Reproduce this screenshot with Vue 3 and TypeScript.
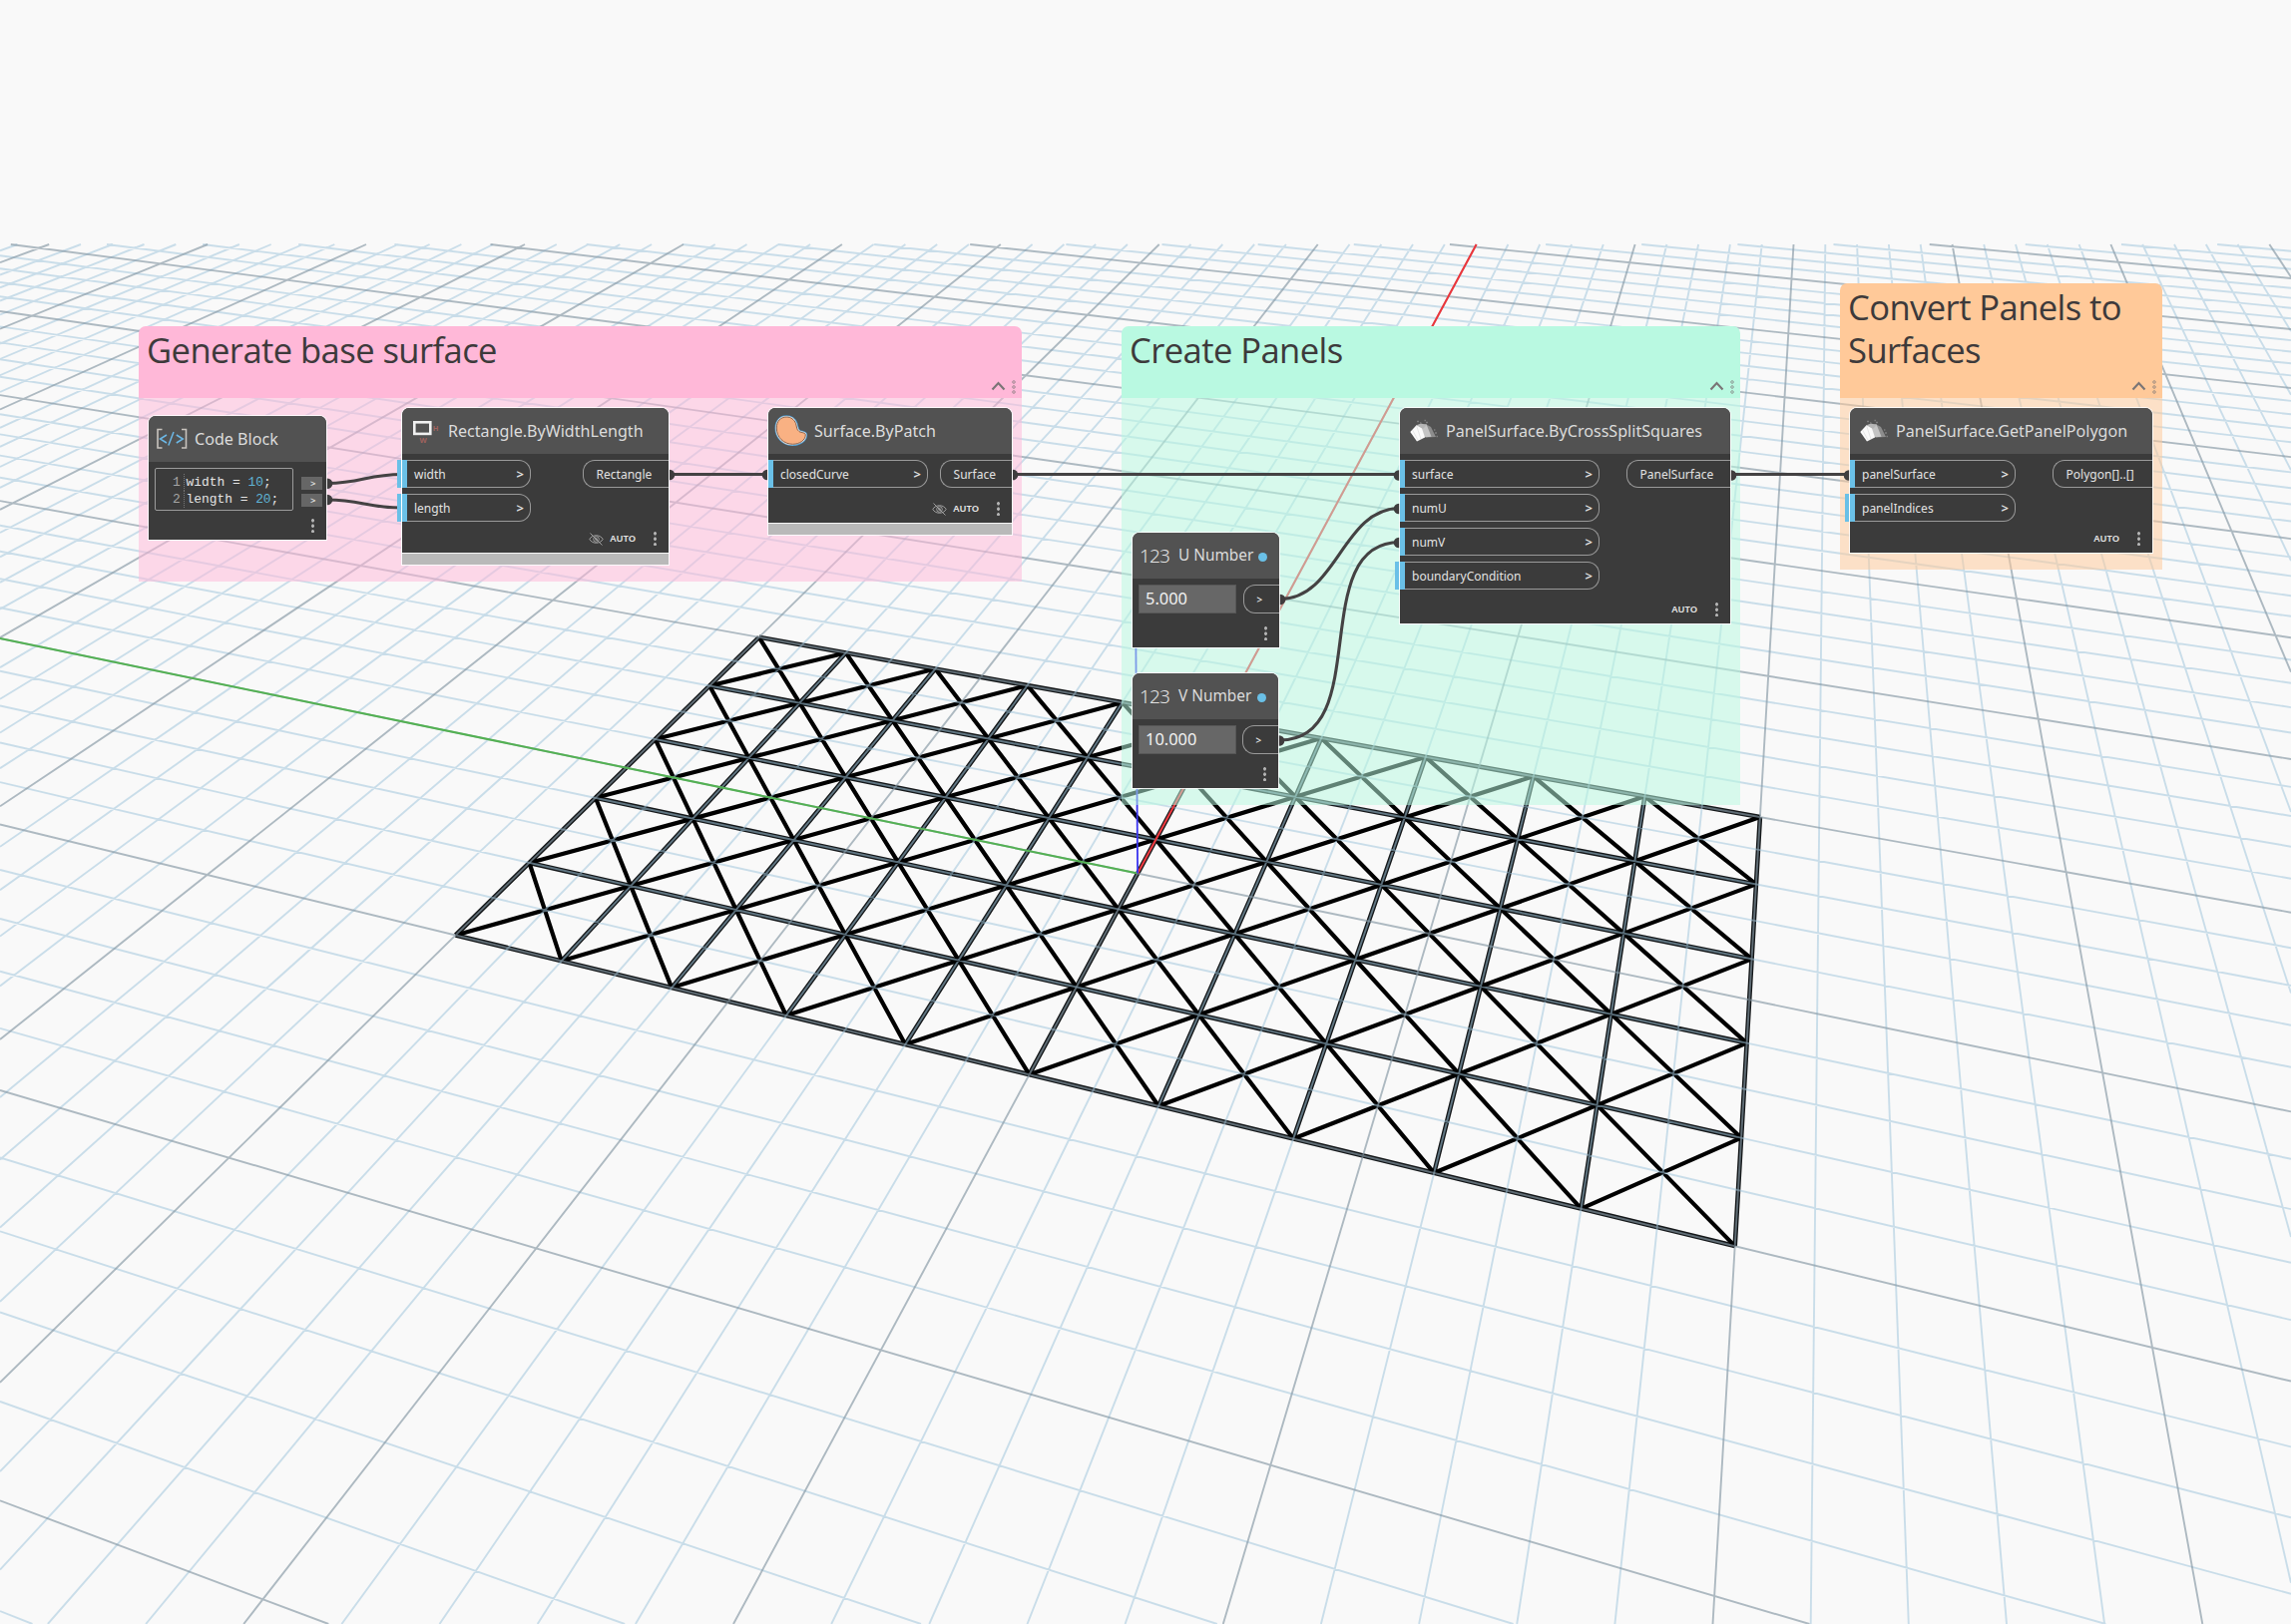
<script setup lang="ts">
interface Seg { x1: number; y1: number; x2: number; y2: number }
interface Group { id: string; title: string; x: number; y: number; w: number; h: number; head: number; color: string }
interface Port { name: string; loose?: boolean }
interface GraphNode {
  id: string; kind: 'rect' | 'patch' | 'panel'; title: string
  x: number; y: number; w: number; h: number
  inputs: Port[]; inW: number; output: string; outW: number
  hidden?: boolean; strip?: boolean
}
interface NumberNode { id: string; title: string; value: string; x: number; y: number; w: number }

const VIEW = { left: 0, right: 2296, top: 245, bottom: 1628 }

// Screen (in thousands of px) -> ground plane projection
const P = {
  u: [49.922603, 50.833715, -70.451087],
  v: [-16.507264, 91.8723, -46.133447],
  w: [0.000041, 2.395529, 1],
}

/** Screen-space line on which ground coordinate `axis` equals k, clipped to the viewport. */
function gridLine(axis: 'u' | 'v', k: number): Seg | null {
  const a = P[axis][0] - k * P.w[0]
  const b = P[axis][1] - k * P.w[1]
  const c = (P[axis][2] - k * P.w[2]) * 1000
  const pts: [number, number][] = []
  for (const x of [VIEW.left, VIEW.right]) {
    const y = -(a * x + c) / b
    if (y >= VIEW.top && y <= VIEW.bottom) pts.push([x, y])
  }
  for (const y of [VIEW.top, VIEW.bottom]) {
    const x = -(b * y + c) / a
    if (x > VIEW.left && x < VIEW.right) pts.push([x, y])
  }
  if (pts.length < 2) return null
  return { x1: pts[0][0], y1: pts[0][1], x2: pts[1][0], y2: pts[1][1] }
}

/** Ground plane -> screen px. */
function project(u: number, v: number): [number, number] {
  const a1 = P.u[0] - u * P.w[0], b1 = P.u[1] - u * P.w[1], c1 = u * P.w[2] - P.u[2]
  const a2 = P.v[0] - v * P.w[0], b2 = P.v[1] - v * P.w[1], c2 = v * P.w[2] - P.v[2]
  const d = a1 * b2 - a2 * b1
  return [(1000 * (c1 * b2 - c2 * b1)) / d, (1000 * (a1 * c2 - a2 * c1)) / d]
}

function seg(u1: number, v1: number, u2: number, v2: number): Seg {
  const [x1, y1] = project(u1, v1)
  const [x2, y2] = project(u2, v2)
  return { x1, y1, x2, y2 }
}

const toPath = (s: Seg[]) =>
  s.map((l) => `M${l.x1.toFixed(1)} ${l.y1.toFixed(1)}L${l.x2.toFixed(1)} ${l.y2.toFixed(1)}`).join('')

const minor: Seg[] = []
const major: Seg[] = []
for (let k = -100; k <= 100; k++) {
  for (const axis of ['u', 'v'] as const) {
    if (axis === 'v' && k > 34) continue
    const l = gridLine(axis, k)
    if (l) (k % 5 === 0 ? major : minor).push(l)
  }
}

const edges: Seg[] = []
const diagonals: Seg[] = []
for (let u = 0; u <= 20; u += 2) edges.push(seg(u, 0, u, 10))
for (let v = 0; v <= 10; v += 2) edges.push(seg(0, v, 20, v))
for (let u = 0; u < 20; u += 2) {
  for (let v = 0; v < 10; v += 2) {
    diagonals.push(seg(u, v, u + 2, v + 2), seg(u + 2, v, u, v + 2))
  }
}

const minorPath = toPath(minor)
const majorPath = toPath(major)
const edgePath = toPath(edges)
const diagPath = toPath(diagonals)
const [ox, oy] = project(10, 5)
const redTop = gridLine('u', 10)!
const greenEnd = gridLine('v', 5)!

const groups: Group[] = [
  { id: 'base', title: 'Generate base surface', x: 139, y: 327, w: 885, h: 256, head: 72, color: '#ffb8d8' },
  { id: 'panels', title: 'Create Panels', x: 1124, y: 327, w: 620, h: 480, head: 72, color: '#b9f9e1' },
  { id: 'convert', title: 'Convert Panels to Surfaces', x: 1844, y: 284, w: 323, h: 287, head: 115, color: '#ffc999' },
]

const nodes: GraphNode[] = [
  { id: 'rectangle', kind: 'rect', title: 'Rectangle.ByWidthLength', x: 403, y: 409, w: 267, h: 145,
    inputs: [{ name: 'width', loose: true }, { name: 'length', loose: true }], inW: 129, output: 'Rectangle', outW: 86, hidden: true, strip: true },
  { id: 'patch', kind: 'patch', title: 'Surface.ByPatch', x: 770, y: 409, w: 244, h: 115,
    inputs: [{ name: 'closedCurve' }], inW: 160, output: 'Surface', outW: 72, hidden: true, strip: true },
  { id: 'split', kind: 'panel', title: 'PanelSurface.ByCrossSplitSquares', x: 1403, y: 409, w: 331, h: 216,
    inputs: [{ name: 'surface' }, { name: 'numU' }, { name: 'numV' }, { name: 'boundaryCondition', loose: true }], inW: 200, output: 'PanelSurface', outW: 104 },
  { id: 'polygon', kind: 'panel', title: 'PanelSurface.GetPanelPolygon', x: 1854, y: 409, w: 303, h: 145,
    inputs: [{ name: 'panelSurface' }, { name: 'panelIndices', loose: true }], inW: 166, output: 'Polygon[]..[]', outW: 100 },
]

const numbers: NumberNode[] = [
  { id: 'u', title: 'U Number', value: '5.000', x: 1135, y: 534, w: 147 },
  { id: 'v', title: 'V Number', value: '10.000', x: 1135, y: 675, w: 146 },
]

const code = [
  { n: 1, name: 'width', value: '10' },
  { n: 2, name: 'length', value: '20' },
]

const wires = [
  'M328 484.5C362 484.5 368 475.5 403 475.5',
  'M328 501C362 501 368 509 403 509',
  'M671 475.5H770',
  'M1015 475.5H1403',
  'M1735 475.5H1854',
  'M1283 600.5C1340 600.5 1345 509.5 1403 509.5',
  'M1283 742C1378 742 1308 543.5 1403 543.5',
]
const nubs = [
  [328, 484.7], [328, 501], [671, 476], [769, 476], [1015, 476], [1402, 476.5],
  [1402, 510], [1402, 544], [1735, 476.5], [1853, 476.5], [1283, 601], [1282, 742.5],
]
</script>

<template>
  <main class="workspace">
    <svg class="layer" width="2296" height="1628" viewBox="0 0 2296 1628">
      <path class="mesh-edge" :d="edgePath" />
      <path class="mesh-diag" :d="diagPath" />
      <path class="grid-minor" :d="minorPath" />
      <path class="grid-major" :d="majorPath" />
      <line class="axis green" :x1="ox" :y1="oy" :x2="greenEnd.x1" :y2="greenEnd.y1" />
      <line class="axis red" :x1="ox" :y1="oy" :x2="redTop.x1" :y2="redTop.y1" />
      <line class="axis blue" :x1="ox" :y1="oy" x2="1138" y2="600" />
    </svg>

    <section
      v-for="g in groups" :key="g.id" class="group"
      :style="{ left: g.x + 'px', top: g.y + 'px', width: g.w + 'px', height: g.h + 'px', '--tint': g.color }"
    >
      <header class="group-head" :style="{ height: g.head + 'px' }">
        <h2 class="group-title">{{ g.title }}</h2>
        <svg class="group-tools" width="32" height="18" viewBox="0 0 32 18">
          <path class="caret" d="M2.5 11.5L8.5 5L14.5 11.5" />
          <circle class="grip" cx="24" cy="4" r="1.3" />
          <circle class="grip" cx="24" cy="9" r="1.3" />
          <circle class="grip" cx="24" cy="14" r="1.3" />
        </svg>
      </header>
      <div class="group-body"></div>
    </section>

    <svg class="layer" width="2296" height="1628" viewBox="0 0 2296 1628">
      <path v-for="d in wires" :key="d" class="wire" :d="d" />
      <circle v-for="(n, i) in nubs" :key="i" class="nub" :cx="n[0]" :cy="n[1]" r="5.3" />
    </svg>

    <article class="node code-node">
      <header class="node-head">
        <svg class="node-icon" width="46" height="46" viewBox="0 0 46 46" fill="none">
          <path d="M13.5 13.5H9V32H13.5M33 13.5H37.5V32H33" stroke="#c9c4be" stroke-width="1.6" />
          <path d="M18 19L11.5 23L18 27M19.8 29.5L25 16M27.8 19L34.3 23L27.8 27" stroke="#6cb8e6" stroke-width="1.5" />
        </svg>
        <span class="node-title">Code Block</span>
      </header>
      <div class="code-body">
        <div class="editor">
          <div v-for="l in code" :key="l.n" class="code-line">
            <span class="line-no">{{ l.n }}</span><span class="code-text">{{ l.name }} = <b>{{ l.value }}</b>;</span>
          </div>
        </div>
        <div class="code-ports">
          <span class="code-port">&gt;</span>
          <span class="code-port">&gt;</span>
        </div>
      </div>
      <footer class="node-foot"><i class="dots"></i></footer>
    </article>

    <article
      v-for="n in nodes" :key="n.id" class="node" :class="{ strip: n.strip }"
      :style="{ left: n.x + 'px', top: n.y + 'px', width: n.w + 'px', height: n.h + 'px' }"
    >
      <header class="node-head">
        <svg v-if="n.kind === 'rect'" class="node-icon" width="46" height="46" viewBox="0 0 46 46">
          <rect x="12.3" y="14.3" width="16" height="11.6" fill="none" stroke="#f0f0f0" stroke-width="2.6" />
          <text x="30.8" y="22.5" class="dim">H</text>
          <text x="17.5" y="34.5" class="dim">W</text>
        </svg>
        <svg v-else-if="n.kind === 'patch'" class="node-icon" width="46" height="46" viewBox="0 0 46 46">
          <path
            v-for="s in ['patch-glow', 'patch-ring', 'patch-fill']" :key="s" :class="s"
            d="M18.3 9C22.5 9 26 11.5 27.5 15.5C28.8 19 28 21.5 31 23.6C33 25 37.3 24.3 37.3 27C37.3 32 31.5 36.3 24.5 36.3C15.5 36.3 8.3 29.5 8.3 20C8.3 13 12.5 9 18.3 9Z"
          />
        </svg>
        <svg v-else class="node-icon" width="46" height="46" viewBox="0 0 46 46">
          <path d="M26.5 16.5L31 19L36 29L26 29.5Z" fill="#8d8d8d" />
          <path d="M17 17.5L26.5 16.2L31.5 28.8L23 29.5Z" fill="#c4c4c4" />
          <path d="M16.5 17.3L21 15.5L27 17L23 21Z" fill="#b5b5b5" />
          <path d="M10.3 24L16.5 17.3L22 20.5L25 29.5L17 33.5Z" fill="#fafafa" />
          <path d="M12.5 22L18 32M16.5 17.3L21 31" stroke="#d9d9d9" stroke-width=".6" fill="none" />
          <path d="M17 13.5h2M20 15h1.4M24.5 12.5h1.4M26 14.5h2M35 25h2M34 22h1.4M36.5 28.5h1.5" stroke="#7d7d7d" stroke-width="1.4" />
        </svg>
        <span class="node-title">{{ n.title }}</span>
      </header>
      <div class="ports">
        <div class="inputs" :style="{ width: n.inW + 'px' }">
          <div v-for="p in n.inputs" :key="p.name" class="input" :class="{ loose: p.loose }">
            <span>{{ p.name }}</span><span class="chev">&gt;</span>
          </div>
        </div>
        <div class="output" :style="{ width: n.outW + 'px' }">{{ n.output }}</div>
      </div>
      <footer class="node-foot">
        <svg v-if="n.hidden" class="eye" width="15" height="13" viewBox="0 0 15 13">
          <path d="M.8 6.5C3.5 1.5 11.5 1.5 14.2 6.5C11.5 11.5 3.5 11.5 .8 6.5Z" />
          <circle cx="7.5" cy="6.5" r="2.8" />
          <circle cx="7.5" cy="6.5" r=".9" />
          <path d="M1.5 .5L13.5 12.5" />
        </svg>
        <span class="auto">AUTO</span><i class="dots"></i>
      </footer>
    </article>

    <article
      v-for="n in numbers" :key="n.id" class="node number-node"
      :style="{ left: n.x + 'px', top: n.y + 'px', width: n.w + 'px' }"
    >
      <header class="node-head">
        <span class="num-icon">123</span>
        <span class="node-title">{{ n.title }}</span>
        <i class="badge"></i>
      </header>
      <div class="number-body">
        <div class="field">{{ n.value }}</div>
        <div class="num-out">&gt;</div>
      </div>
      <footer class="node-foot"><i class="dots"></i></footer>
    </article>
  </main>
</template>

<style>
body { background: #f9f9f9; }
</style>

<style scoped>
.workspace {
  position: relative;
  width: 2296px;
  height: 1628px;
  overflow: hidden;
  background: #f9f9f9;
  font-family: "Noto Sans", "Open Sans", sans-serif;
}
.layer { position: absolute; inset: 0; }
.layer path { fill: none; }
.mesh-edge { stroke: #15181a; stroke-width: 4.6; }
.mesh-diag { stroke: #000; stroke-width: 4.2; }
.grid-minor { stroke: rgb(160, 198, 220); stroke-opacity: .54; stroke-width: 1.9; }
.grid-major { stroke: rgb(134, 152, 164); stroke-opacity: .66; stroke-width: 1.9; }
.axis { stroke-width: 2; }
.green { stroke: #53b153; }
.red { stroke: #ee343a; }
.blue { stroke: #3a34f0; stroke-width: 1.8; }
.wire { stroke: #444243; stroke-width: 3.1; }
.nub { fill: #3f3d3e; }

.group { position: absolute; display: flex; flex-direction: column; border-radius: 7px 7px 0 0; overflow: hidden; }
.group-head { position: relative; flex: none; box-sizing: border-box; padding: 2px 8px 0; background: var(--tint); }
.group-body { flex: 1; background: var(--tint); opacity: .52; }
.group-title {
  margin: 0;
  font: 400 34.6px/43px "Open Sans", "Noto Sans", sans-serif;
  letter-spacing: -.58px;
  color: #3d3a3b;
}
.group-tools { position: absolute; right: 0; bottom: 2px; }
.caret { fill: none; stroke: #7a7576; stroke-width: 2.1; }
.grip { fill: none; stroke: #7a7576; stroke-width: .7; }

.node {
  position: absolute;
  display: flex;
  flex-direction: column;
  background: #3b3b3b;
  color: #e2e2e2;
  border-radius: 7px 7px 0 0;
  box-shadow: 0 0 0 1px rgba(255, 255, 255, .85);
}
.strip { box-shadow: 0 0 0 1px rgba(255, 255, 255, .85), 0 12px 0 0 #b9b9b9, 0 12px 0 1px rgba(255, 255, 255, .85); }
.node-head {
  display: flex;
  align-items: center;
  flex: none;
  height: 46px;
  background: #525252;
  border-radius: 7px 7px 0 0;
}
.node-icon { flex: none; width: 46px; height: 46px; }
.node-title { padding-bottom: 1px; font-size: 16.1px; line-height: 22px; white-space: nowrap; color: #dcdcdc; }
.dim { font: 700 7.5px "Noto Sans", sans-serif; fill: #a0625e; }
.patch-glow { fill: none; stroke: #4d9bd0; stroke-width: 3.6; }
.patch-ring { fill: none; stroke: #f4e6dc; stroke-width: 2; }
.patch-fill { fill: #f9b183; stroke: #6b4a3a; stroke-width: .8; }

.ports { display: flex; justify-content: space-between; align-items: flex-start; flex: 1; padding-top: 6px; }
.inputs { display: flex; flex-direction: column; gap: 6px; }
.input {
  position: relative;
  display: flex;
  align-items: center;
  justify-content: space-between;
  box-sizing: border-box;
  height: 28px;
  padding: 0 6px 0 12px;
  border: 1px solid #9a9a9a;
  border-left: 0;
  border-radius: 0 12px 12px 0;
  font-size: 12px;
}
.input::before { content: ""; position: absolute; left: 0; top: -1px; width: 5px; height: 28px; background: #6ac0e7; }
.loose::after { content: ""; position: absolute; left: -5px; top: -1px; width: 4px; height: 28px; background: #6ac0e7; }
.chev { font-size: 13px; font-weight: 600; }
.output {
  box-sizing: border-box;
  height: 28px;
  padding-left: 12.6px;
  border: 1px solid #9a9a9a;
  border-right: 0;
  border-radius: 12px 0 0 12px;
  font-size: 12px;
  line-height: 27px;
  white-space: nowrap;
}
.node-foot { display: flex; align-items: center; justify-content: flex-end; flex: none; height: 28px; padding-right: 12px; }
.auto { font-size: 9.4px; font-weight: 600; line-height: 12px; color: #e6e6e6; margin-right: 17.5px; }
.eye { margin-right: 6px; fill: none; stroke: #a8a8a8; stroke-width: .9; }
.dots {
  width: 3.4px;
  height: 14.4px;
  background: radial-gradient(circle, #b4b4b4 1.5px, transparent 1.9px) 0 0 / 3.4px 5.5px;
  background-position: 0 -1px;
}

.code-node { left: 149px; top: 417px; width: 178px; height: 124px; }
.code-body { display: flex; justify-content: space-between; flex: 1; padding: 6px 4px 0 6px; }
.editor {
  box-sizing: border-box;
  width: 139px;
  height: 43px;
  padding: 5px 0 0 17px;
  border: 1px solid #9b9b9b;
  border-radius: 2px;
  font: 12.9px/17px "Liberation Mono", "DejaVu Sans Mono", monospace;
}
.code-line { display: flex; height: 17px; }
.line-no { width: 10.5px; border-right: 1px dotted #777; color: #a5a5a5; }
.code-text { padding-left: 2px; white-space: pre; color: #e4e4e4; }
.code-text b { font-weight: 400; color: #5fb4d6; }
.code-ports { display: flex; flex-direction: column; gap: 4px; padding-top: 9px; }
.code-port { width: 21px; height: 13px; box-sizing: border-box; padding-left: 9px; background: #666; font-size: 9.5px; font-weight: 600; line-height: 13px; }

.number-node { height: 115px; }
.num-icon { width: 46px; box-sizing: border-box; padding: 0 0 1px 7px; flex: none; font-size: 19px; font-weight: 300; line-height: 24px; letter-spacing: -.8px; }
.number-node .node-title { padding-bottom: 0; font-size: 15.4px; }
.badge { width: 9px; height: 9px; margin: 3px 12px 0 auto; border-radius: 50%; background: #6ac0e7; }
.number-body { display: flex; justify-content: space-between; flex: 1; padding: 6px 0 0 6px; }
.field {
  box-sizing: border-box;
  width: 98px;
  height: 29px;
  padding-left: 6px;
  border: 1px solid #575757;
  background: #676767;
  font-size: 16.4px;
  line-height: 26px;
  color: #f2f2f2;
}
.num-out {
  box-sizing: border-box;
  width: 36px;
  height: 29px;
  padding-left: 12.5px;
  border: 1px solid #9a9a9a;
  border-right: 0;
  border-radius: 12px 0 0 12px;
  font-size: 10px;
  font-weight: 600;
  line-height: 28px;
}
</style>
